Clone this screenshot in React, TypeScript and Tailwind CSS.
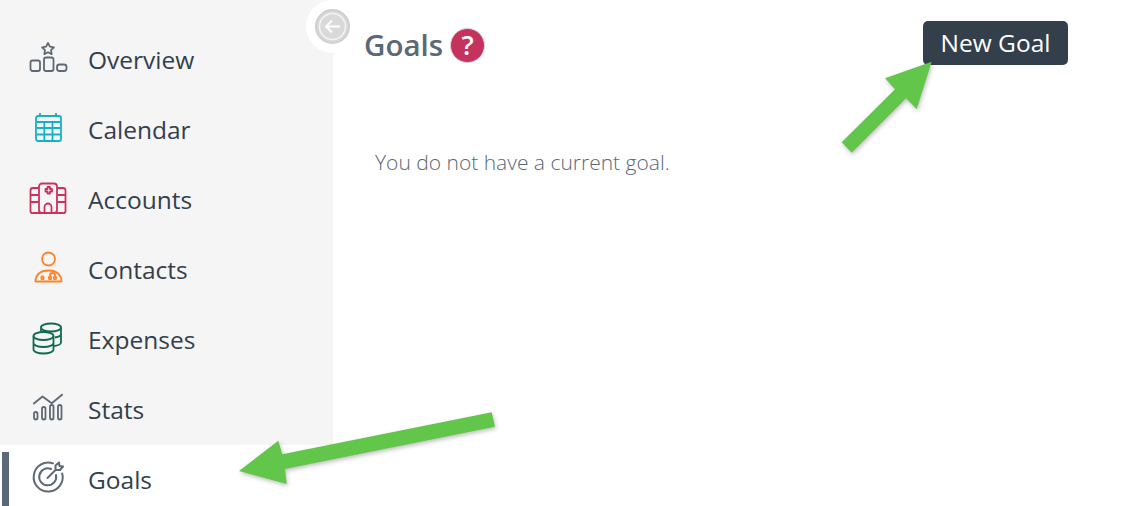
const OverviewIcon = () => (
  <svg width="40" height="40" viewBox="0 0 40 40" fill="none" stroke="#5f6973" strokeWidth="1.8" strokeLinejoin="round">
    <path d="M20 3l1.900 3.700 4 .6-2.900 2.800.7 4-3.700-1.900-3.700 1.900.7-4-2.900-2.800 4-.6z" />
    <rect x="2.500" y="20.500" width="9.500" height="10.500" rx="2" />
    <rect x="16" y="17.500" width="9.500" height="13.500" rx="2" />
    <rect x="29" y="24.500" width="9.500" height="6.500" rx="2.500" />
  </svg>
);

const CalendarIcon = () => (
  <svg width="40" height="40" viewBox="0 0 40 40" fill="none" stroke="#17b1c4" strokeWidth="1.8" strokeLinejoin="round">
    <rect x="8" y="6" width="25" height="25" rx="2" />
    <path d="M8 12h25M8 18h25M8 24.500h25M16.300 12v19M24.500 12v19M12 3v3M28 3v3" />
  </svg>
);

const AccountsIcon = () => (
  <svg width="40" height="40" viewBox="0 0 40 40" fill="none" stroke="#c9345f" strokeWidth="1.8" strokeLinejoin="round">
    <path d="M11 8H5a2.500 2.500 0 0 0-2.500 2.500v20A2 2 0 0 0 5 33h30a2 2 0 0 0 2.500-2.500v-20A2.500 2.500 0 0 0 35 8h-6" />
    <rect x="11" y="3.500" width="18" height="29.500" rx="3" />
    <path d="M17.500 9h2v-2h2.500v2h2v2.500h-2v2h-2.500v-2h-2zM16.500 33v-6a3.500 3.500 0 0 1 7 0v6M2.500 15H11M2.500 22H11M29 15h8.500M29 22h8.500" />
  </svg>
);

const ContactsIcon = () => (
  <svg width="40" height="40" viewBox="0 0 40 40" fill="none" stroke="#ff8226" strokeWidth="1.8" strokeLinejoin="round">
    <circle cx="20.500" cy="9" r="6.500" />
    <path d="M7.500 31.500c0-6 4-11 13-11s13 5 13 11z" />
    <path d="M14.500 25.500v1.500M22 27v-1.500a2.500 2.500 0 0 1 5 0V27" />
    <circle cx="14.500" cy="28" r="1.300" />
    <circle cx="22" cy="28" r="1.300" />
    <circle cx="27" cy="28" r="1.300" />
  </svg>
);

const ExpensesIcon = () => (
  <svg width="40" height="40" viewBox="0 0 40 40" fill="none" stroke="#0f6b50" strokeWidth="1.8" strokeLinejoin="round">
    <ellipse cx="15.500" cy="16" rx="10" ry="4" />
    <path d="M5.500 16v13.500c0 2.200 4.500 4 10 4s10-1.800 10-4V16M5.500 23c0 2.200 4.500 4 10 4s10-1.800 10-4" />
    <path d="M13 11.500V7.500c0-2.200 4.500-4 10-4s10 1.800 10 4v15c0 1.500-2.500 3-7.500 3.700M13 7.500c0 2.200 4.500 4 10 4s10-1.800 10-4M27 17.500c3-.5 6-1.600 6-3.500" />
  </svg>
);

const StatsIcon = () => (
  <svg width="40" height="40" viewBox="0 0 40 40" fill="none" stroke="#5f6973" strokeWidth="1.8" strokeLinejoin="round">
    <path d="M5.300 14l9.200-7.500 9.200 6.800 11-9" />
    <rect x="6" y="22" width="3.500" height="7.500" rx="1.700" />
    <rect x="14" y="17" width="3.500" height="12.500" rx="1.700" />
    <rect x="22" y="15" width="3.500" height="14.500" rx="1.700" />
    <rect x="30" y="15" width="3.500" height="14.500" rx="1.700" />
  </svg>
);

const GoalsIcon = () => (
  <svg width="40" height="40" viewBox="0 0 40 40" fill="none" stroke="#5f6973" strokeWidth="2" strokeLinejoin="round" strokeLinecap="round">
    <path d="M25 3.400a14.500 14.500 0 1 0 9.200 10" />
    <path d="M23 9a8.500 8.500 0 1 0 5 6" />
    <path d="M19.500 18l8-8M27.500 10V5.500l3.500-3 .5 3.500 3.500.5-3 3.500z" />
  </svg>
);

const items = [
  { label: "Overview", icon: <OverviewIcon /> },
  { label: "Calendar", icon: <CalendarIcon /> },
  { label: "Accounts", icon: <AccountsIcon /> },
  { label: "Contacts", icon: <ContactsIcon /> },
  { label: "Expenses", icon: <ExpensesIcon /> },
  { label: "Stats", icon: <StatsIcon /> },
];

function NavRow({ label, icon, active }: { label: string; icon: React.ReactNode; active?: boolean }) {
  return (
    <div className={active ? "flex h-[70px] shrink-0 items-center bg-white" : "flex h-[70px] shrink-0 items-center"}>
      <div className={active ? "ml-[2px] mt-[7px] h-[56px] w-[7px] self-start bg-[#5b6875]" : "ml-[2px] w-[7px]"} />
      <div className="ml-[19px] flex h-[40px] w-[40px] items-center justify-center">{icon}</div>
      <span className="ml-[20px] text-[24.500px] text-[#333f4b]">{label}</span>
    </div>
  );
}

export default function App() {
  return (
    <div className="relative flex h-[506px] w-[1134px] overflow-hidden bg-white font-['Open_Sans',sans-serif]">
      <aside className="flex w-[333px] shrink-0 flex-col bg-[#f5f5f5] pt-[25px]">
        {items.map((item) => (
          <NavRow key={item.label} label={item.label} icon={item.icon} />
        ))}
        <NavRow label="Goals" icon={<GoalsIcon />} active />
      </aside>

      <main className="flex-1 pl-[31px] pr-[66px]">
        <div className="flex items-start justify-between">
          <div className="mt-[25px] flex items-center gap-[7px]">
            <h1 className="text-[29.500px] leading-[40px] font-semibold text-[#5b6875]">Goals</h1>
            <span className="flex h-[35px] w-[35px] items-center justify-center rounded-full border border-[#d5d5d5] bg-[#c5325e] text-[27px] font-semibold text-white">
              ?
            </span>
          </div>
          <button className="mt-[21px] flex h-[44px] w-[145px] items-center justify-center rounded-[5px] bg-[#333f4b] text-[24.500px] text-white">
            New Goal
          </button>
        </div>
        <p className="mt-[82px] ml-[11px] text-[21px] font-light text-[#5b6875]">You do not have a current goal.</p>
      </main>

      {/* collapse toggle sits over the sidebar edge */}
      <div className="absolute top-0 left-[306px] flex h-[53px] w-[53px] items-center justify-center rounded-full bg-white">
        <svg width="36" height="36" viewBox="0 0 36 36" fill="none">
          <circle cx="17.500" cy="17.500" r="16.500" fill="#d9d9d9" stroke="#cfcfcf" strokeWidth="2" />
          <circle cx="17.500" cy="17.500" r="13" stroke="#f4f4f4" strokeWidth="1.500" />
          <path d="M25 17.500H11M17 11.500l-6 6 6 6" stroke="#fff" strokeWidth="2" />
        </svg>
      </div>

      {/* annotation arrows */}
      <svg className="pointer-events-none absolute inset-0 drop-shadow-[1px_2px_2px_rgba(0,0,0,0.25)]" width="1134" height="506" fill="#62c64a">
        <path d="M931.700 61.700L885 78.300 895 89.300 841.700 142.300 851.700 152.700 906 98.300 916.700 109z" />
        <path d="M239 471L278.300 440.700 282.300 454.300 491.700 412.300 495 426.700 285 469 286.700 484z" />
      </svg>
    </div>
  );
}
